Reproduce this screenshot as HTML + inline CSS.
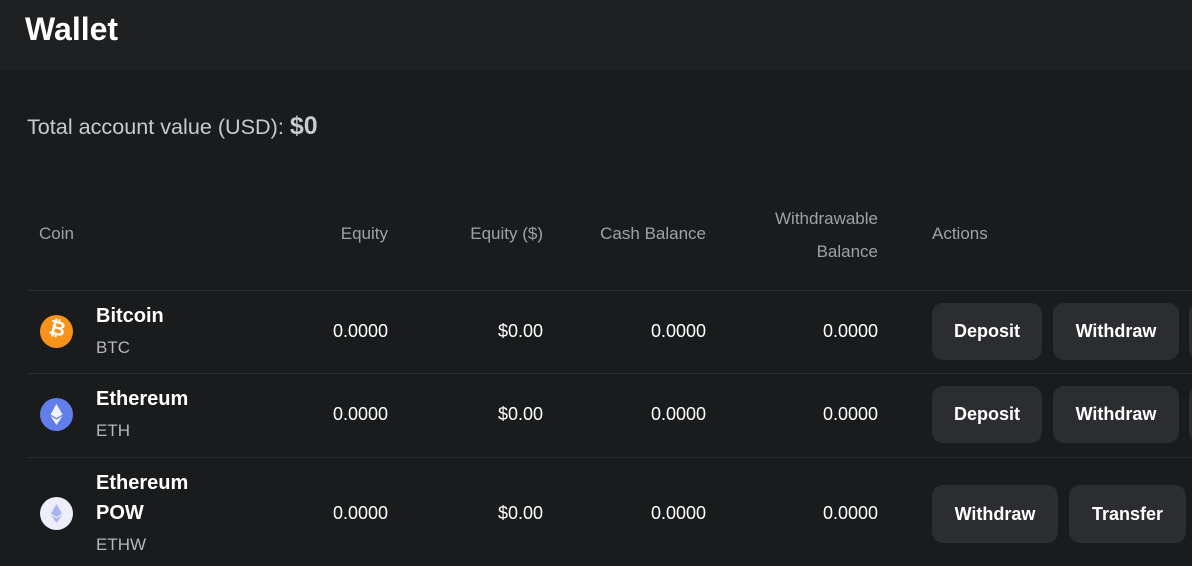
<!DOCTYPE html>
<html><head><style>
*{margin:0;padding:0;box-sizing:border-box}
body{width:1192px;height:566px;background:#1a1b1d;font-family:"Liberation Sans",sans-serif;color:#fff;position:relative;overflow:hidden}
.hdr{position:absolute;left:0;top:0;width:1192px;height:70px;background:#1f2022}
.t{position:absolute;white-space:nowrap}
.h{color:#9fa1a5;font-size:17px}
.r{text-align:right}
.sep{position:absolute;left:27px;width:1165px;height:1px;background:#2a2b2e}
.btn{position:absolute;background:#2c2d30;border-radius:11px;color:#fff;font-weight:bold;font-size:18px;display:flex;align-items:center;justify-content:center}
.num{font-size:18px}
.name{font-size:20px;font-weight:bold}
.sym{font-size:17px;color:#b5b7ba}
.ic{position:absolute;left:40px;width:33px;height:33px;border-radius:50%}
</style></head><body>
<div class="hdr"></div>
<div class="t" style="left:25px;top:11px;font-size:32px;font-weight:bold">Wallet</div>
<div class="t" style="left:27px;top:112px;font-size:21.6px;color:#c9cacd">Total account value (USD): <b style="font-size:25px">$0</b></div>

<div class="t h" style="left:39px;top:224px">Coin</div>
<div class="t h r" style="right:804px;top:224px">Equity</div>
<div class="t h r" style="right:649px;top:224px">Equity ($)</div>
<div class="t h r" style="right:486px;top:224px">Cash Balance</div>
<div class="t h r" style="right:314px;top:202px;line-height:33px">Withdrawable<br>Balance</div>
<div class="t h" style="left:932px;top:224px">Actions</div>

<div class="sep" style="top:290px"></div>
<div class="sep" style="top:373px"></div>
<div class="sep" style="top:457px"></div>

<!-- row 1 -->
<div class="ic" style="top:315px;background:#f7931a"></div>
<div class="t" style="left:49px;top:318px;font-size:20px;font-weight:bold;color:#fff;transform:rotate(14deg)">₿</div>
<div class="t name" style="left:96px;top:305px">Bitcoin</div>
<div class="t sym" style="left:96px;top:338px">BTC</div>
<div class="t num r" style="right:804px;top:321px">0.0000</div>
<div class="t num r" style="right:649px;top:321px">$0.00</div>
<div class="t num r" style="right:486px;top:321px">0.0000</div>
<div class="t num r" style="right:314px;top:321px">0.0000</div>
<div class="btn" style="left:932px;top:303px;width:110px;height:57px">Deposit</div>
<div class="btn" style="left:1053px;top:303px;width:126px;height:57px">Withdraw</div>
<div class="btn" style="left:1189px;top:303px;width:40px;height:57px"></div>

<!-- row 2 -->
<div class="ic" style="top:398px;background:#627eea"></div>
<svg class="t" style="left:40px;top:398px" width="33" height="33"><path d="M16.5 6 L22.5 16.5 L16.5 20 L10.5 16.5Z" fill="#fff" opacity=".9"/><path d="M16.5 21.5 L22.5 18 L16.5 27 L10.5 18Z" fill="#fff" opacity=".9"/></svg>
<div class="t name" style="left:96px;top:388px">Ethereum</div>
<div class="t sym" style="left:96px;top:421px">ETH</div>
<div class="t num r" style="right:804px;top:404px">0.0000</div>
<div class="t num r" style="right:649px;top:404px">$0.00</div>
<div class="t num r" style="right:486px;top:404px">0.0000</div>
<div class="t num r" style="right:314px;top:404px">0.0000</div>
<div class="btn" style="left:932px;top:386px;width:110px;height:57px">Deposit</div>
<div class="btn" style="left:1053px;top:386px;width:126px;height:57px">Withdraw</div>
<div class="btn" style="left:1189px;top:386px;width:40px;height:57px"></div>

<!-- row 3 -->
<div class="ic" style="top:497px;background:#eceefb"></div>
<svg class="t" style="left:40px;top:497px" width="33" height="33"><path d="M16.5 7 L22 16.5 L16.5 20 L11 16.5Z" fill="#a9b4ee"/><path d="M16.5 21.5 L22 18 L16.5 26 L11 18Z" fill="#a9b4ee"/></svg>
<div class="t name" style="left:96px;top:472px">Ethereum</div>
<div class="t name" style="left:96px;top:502px">POW</div>
<div class="t sym" style="left:96px;top:535px">ETHW</div>
<div class="t num r" style="right:804px;top:503px">0.0000</div>
<div class="t num r" style="right:649px;top:503px">$0.00</div>
<div class="t num r" style="right:486px;top:503px">0.0000</div>
<div class="t num r" style="right:314px;top:503px">0.0000</div>
<div class="btn" style="left:932px;top:485px;width:126px;height:58px">Withdraw</div>
<div class="btn" style="left:1069px;top:485px;width:117px;height:58px">Transfer</div>
</body></html>
